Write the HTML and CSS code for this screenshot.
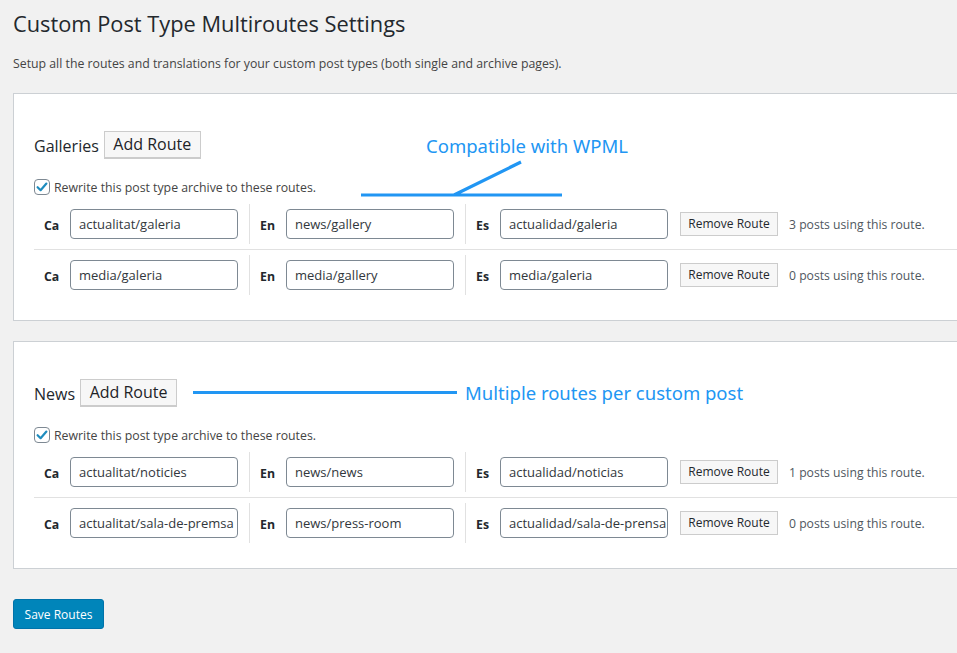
FILE: index.html
```html
<!DOCTYPE html>
<html>
<head>
<meta charset="utf-8">
<link rel="stylesheet" href="styles.css">
</head>
<body>
<div class="wrap">
  <h1 class="title">Custom Post Type Multiroutes Settings</h1>
  <p class="intro">Setup all the routes and translations for your custom post types (both single and archive pages).</p>

  <section class="card">
    <div class="card-head">
      <span class="type-name">Galleries</span>
      <button class="btn btn-add">Add Route</button>
    </div>
    <label class="rewrite">
      <span class="check"><svg viewBox="0 0 16 16" width="16" height="16"><path d="M3.6 8.2 L6.6 11.2 L12.4 4.6" fill="none" stroke="#1e8cbe" stroke-width="2.2" stroke-linecap="round" stroke-linejoin="round"/></svg></span>
      Rewrite this post type archive to these routes.
    </label>
    <div class="routes">
      <div class="route">
        <div class="cell"><span class="lang">Ca</span><span class="field">actualitat/galeria</span></div>
        <div class="cell"><span class="lang">En</span><span class="field">news/gallery</span></div>
        <div class="cell cell-last"><span class="lang">Es</span><span class="field">actualidad/galeria</span><button class="btn btn-remove">Remove Route</button><span class="count">3 posts using this route.</span></div>
      </div>
      <div class="route">
        <div class="cell"><span class="lang">Ca</span><span class="field">media/galeria</span></div>
        <div class="cell"><span class="lang">En</span><span class="field">media/gallery</span></div>
        <div class="cell cell-last"><span class="lang">Es</span><span class="field">media/galeria</span><button class="btn btn-remove">Remove Route</button><span class="count">0 posts using this route.</span></div>
      </div>
    </div>
    <div class="note note-wpml">
      <svg class="note-lines" width="220" height="40" viewBox="0 0 220 40"><path d="M0 36 H201 M93 36 L160 3" fill="none" stroke="#2196f3" stroke-width="3.2"/></svg>
      <span class="note-text">Compatible with WPML</span>
    </div>
  </section>

  <section class="card">
    <div class="card-head">
      <span class="type-name">News</span>
      <button class="btn btn-add">Add Route</button>
      <span class="note-inline"><span class="note-rule"></span><span class="note-text">Multiple routes per custom post</span></span>
    </div>
    <label class="rewrite">
      <span class="check"><svg viewBox="0 0 16 16" width="16" height="16"><path d="M3.6 8.2 L6.6 11.2 L12.4 4.6" fill="none" stroke="#1e8cbe" stroke-width="2.2" stroke-linecap="round" stroke-linejoin="round"/></svg></span>
      Rewrite this post type archive to these routes.
    </label>
    <div class="routes">
      <div class="route">
        <div class="cell"><span class="lang">Ca</span><span class="field">actualitat/noticies</span></div>
        <div class="cell"><span class="lang">En</span><span class="field">news/news</span></div>
        <div class="cell cell-last"><span class="lang">Es</span><span class="field">actualidad/noticias</span><button class="btn btn-remove">Remove Route</button><span class="count">1 posts using this route.</span></div>
      </div>
      <div class="route">
        <div class="cell"><span class="lang">Ca</span><span class="field">actualitat/sala-de-premsa</span></div>
        <div class="cell"><span class="lang">En</span><span class="field">news/press-room</span></div>
        <div class="cell cell-last"><span class="lang">Es</span><span class="field">actualidad/sala-de-prensa</span><button class="btn btn-remove">Remove Route</button><span class="count">0 posts using this route.</span></div>
      </div>
    </div>
  </section>

  <button class="btn btn-primary">Save Routes</button>
</div>
</body>
</html>
```

FILE: styles.css
```css
html, body {
  margin: 0;
  padding: 0;
  background: #f1f1f1;
  overflow: hidden;
}
body {
  font-family: "Open Sans", "Noto Sans", sans-serif;
  color: #444;
  width: 957px;
  height: 653px;
}
.wrap {
  padding-left: 13px;
}
.title {
  margin: 0;
  padding-top: 9px;
  font-size: 21.8px;
  font-weight: 400;
  line-height: 29px;
  color: #23282d;
}
.intro {
  margin: 16px 0 0;
  font-size: 12.3px;
  line-height: 20px;
  color: #444;
}
.card {
  position: relative;
  margin-top: 19px;
  width: 1000px;
  background: #fff;
  border: 1px solid #ccd0d4;
  padding: 37px 20px 20px 20px;
  box-sizing: border-box;
}
.card + .card {
  margin-top: 20px;
}
.card-head {
  display: flex;
  align-items: center;
  height: 27px;
}
.type-name {
  font-size: 16px;
  color: #23282d;
  margin-right: 5px;
  padding-top: 2px;
}
.btn {
  font-family: inherit;
  box-sizing: border-box;
  border: 1px solid #ccc;
  background: #f7f7f7;
  color: #23282d;
  border-radius: 0;
  padding: 0;
  cursor: pointer;
}
.btn-add {
  width: 97px;
  height: 27px;
  font-size: 16px;
  line-height: 25px;
  color: #1d2327;
  box-shadow: 0 1px 0 #ccc;
}
.rewrite {
  display: flex;
  align-items: center;
  gap: 4px;
  margin-top: 21px;
  height: 16px;
  font-size: 12.3px;
  color: #444;
}
.check {
  display: inline-flex;
  width: 16px;
  height: 16px;
  box-sizing: border-box;
  border: 1px solid #7e8993;
  border-radius: 4px;
  background: #fff;
  align-items: center;
  justify-content: center;
}
.check svg {
  display: block;
  margin: -1px;
}
.routes {
  margin-top: 4px;
}
.route {
  display: flex;
  padding: 5px 0;
  border-bottom: 1px solid #e1e1e1;
}
.route:last-child {
  border-bottom: none;
}
.cell {
  display: flex;
  align-items: center;
  height: 40px;
  width: 216px;
  box-sizing: border-box;
  padding: 0 11px 0 10px;
  border-left: 1px solid #e1e1e1;
}
.cell:first-child {
  border-left: none;
  width: 215px;
}
.cell-last {
  width: auto;
}
.lang {
  width: 26px;
  font-weight: 700;
  font-size: 12.3px;
  color: #23282d;
  padding-top: 2px;
}
.cell-last .lang {
  width: 24px;
}
.field {
  width: 168px;
  height: 30px;
  box-sizing: border-box;
  border: 1px solid #7e8993;
  border-radius: 4px;
  padding: 0 8px;
  font-size: 13px;
  line-height: 28px;
  color: #32373c;
  white-space: nowrap;
  overflow: hidden;
  background: #fff;
}
.btn-remove {
  width: 98px;
  height: 24px;
  font-size: 12px;
  line-height: 22px;
  margin-left: 12px;
  margin-right: 11px;
}
.count {
  font-size: 12.2px;
  color: #50575e;
  white-space: nowrap;
}
.note {
  position: absolute;
}
.note-wpml {
  left: 347px;
  top: 44px;
  width: 300px;
  height: 110px;
}
.note-lines {
  position: absolute;
  left: 0;
  top: 21px;
}
.note-wpml .note-text {
  position: absolute;
  left: 65px;
  top: -5px;
}
.note-text {
  font-family: "Noto Sans", sans-serif;
  font-size: 18.5px;
  line-height: 26px;
  color: #2196f3;
  white-space: nowrap;
}
.note-inline {
  display: flex;
  align-items: center;
  margin-left: 16px;
}
.note-rule {
  width: 264px;
  height: 3px;
  background: #2196f3;
  margin-right: 8px;
}
.btn-primary {
  margin-top: 30px;
  width: 91px;
  height: 30px;
  background: #0085ba;
  border: 1px solid #0073aa;
  border-radius: 3px;
  color: #fff;
  font-size: 12px;
}
```
